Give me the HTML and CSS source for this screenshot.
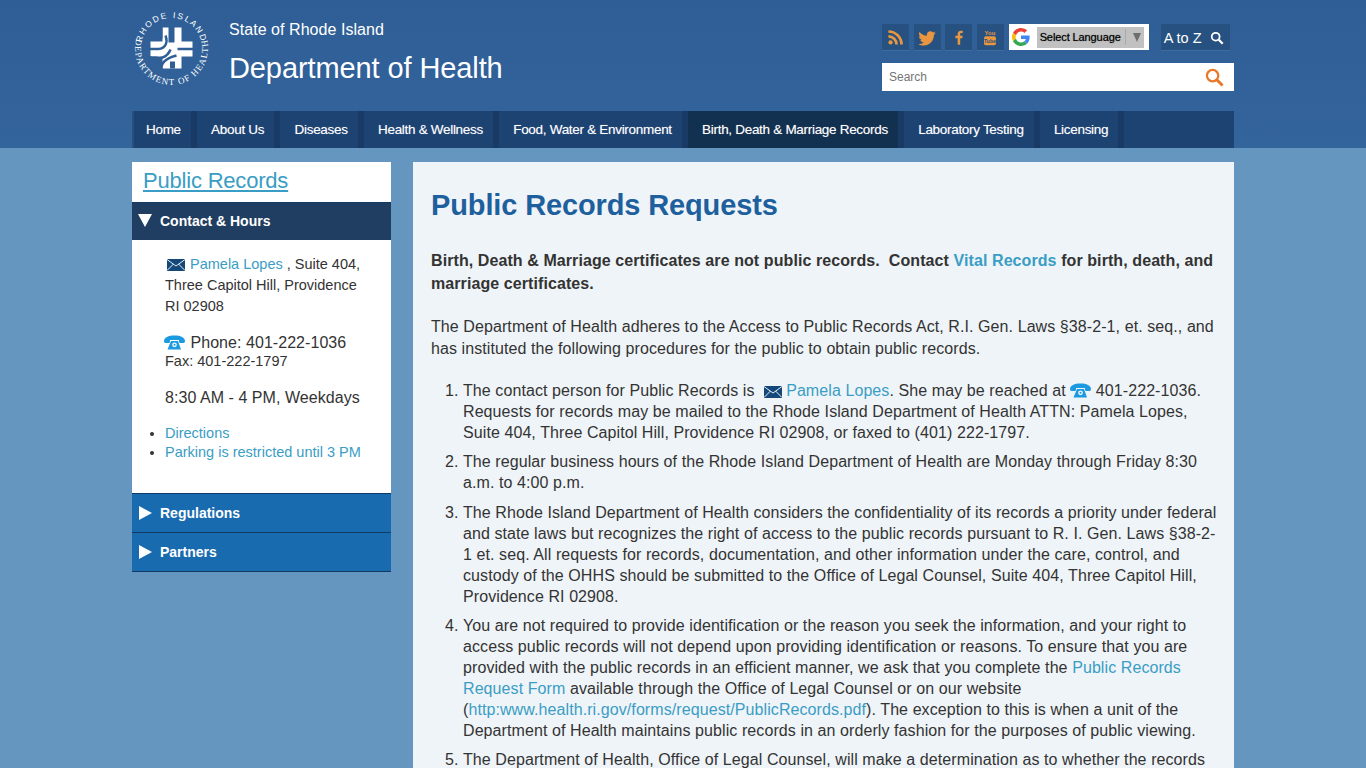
FILE: index.html
```html
<!DOCTYPE html>
<html lang="en">
<head>
<meta charset="utf-8">
<title>Public Records Requests</title>
<link rel="stylesheet" href="styles.css">
</head>
<body>
<svg class="sprites" width="0" height="0" aria-hidden="true">
  <symbol id="mail" viewBox="0 0 18 12">
    <rect width="18" height="12" fill="#14477a"/>
    <path d="M0 0.5 9 7 18 0.5M0 11.5 6.5 5M18 11.5 11.5 5" fill="none" stroke="#e8f0f6" stroke-width="1"/>
  </symbol>
  <symbol id="phone" viewBox="0 0 22 15">
    <path d="M.5 6C.5 2.500 5 .5 11 .5S21.500 2.500 21.500 6c0 1.300-.6 1.900-1.500 1.900h-3.300c-.9 0-1.200-.5-1.200-1.300V5h-9v1.600c0 .8-.3 1.300-1.200 1.300H2C1.100 7.900.5 7.300.5 6Z" fill="#1c9ae0"/>
    <path d="M7.500 6h7l3 8.500h-13.500Z" fill="#1c9ae0"/>
    <circle cx="11" cy="9.800" r="2.400" fill="#eef6fb"/>
    <circle cx="11" cy="9.800" r="1" fill="#1c9ae0"/>
  </symbol>
</svg>

<header class="site-header">
  <div class="wrap">
    <div class="top-row">
      <a class="brand" href="#">
        <svg class="logo" viewBox=".5 .5 80 80" role="img" aria-label="Rhode Island Department of Health seal">
          <defs>
            <path id="arcTop" d="M24.750 66.400A30.500 30.500 0 1 1 55.250 66.400"/>
            <path id="arcBot" d="M21.750 8.400A36.500 36.500 0 1 0 58.250 8.400"/>
          </defs>
          <text class="seal-text seal-top"><textPath href="#arcTop" startOffset="50%" text-anchor="middle">RHODE ISLAND</textPath></text>
          <text class="seal-text seal-bot"><textPath href="#arcBot" startOffset="50%" text-anchor="middle">DEPARTMENT OF HEALTH</textPath></text>
          <g fill="#fff">
            <rect x="31" y="19" width="19" height="41"/>
            <rect x="19" y="33" width="42" height="15"/>
          </g>
          <g fill="none" stroke="#2f5f96">
            <path d="M40 18V34" stroke-width="6"/>
            <path d="M41 60V53" stroke-width="5"/>
            <path d="M46 40.500H62" stroke-width="2.500"/>
            <path d="M18 40.500H27C33 40 37 35 34 27" stroke-width="2.500"/>
            <path d="M18 49C27 52 36 49 39 41" stroke-width="2.500"/>
            <path d="M30 61C29 55 34 50 45 47" stroke-width="2.500"/>
          </g>
          <g fill="#2f5f96">
            <rect x="18" y="48" width="8" height="3"/>
            <rect x="28" y="18" width="3" height="12"/>
          </g>
        </svg>
        <span class="brand-text">
          <span class="state">State of Rhode Island</span>
          <span class="dept">Department of Health</span>
        </span>
      </a>
      <div class="tools">
        <div class="tools-row">
          <a class="social" href="#" aria-label="RSS">
            <svg viewBox="0 0 24 24" width="17" height="17"><circle cx="5" cy="19" r="3" fill="#e8963f"/><path d="M2 10.500A11.500 11.500 0 0 1 13.500 22M2 3.500A18.500 18.500 0 0 1 20.500 22" fill="none" stroke="#e8963f" stroke-width="3.800"/></svg>
          </a>
          <a class="social" href="#" aria-label="Twitter">
            <svg viewBox="0 0 24 24" width="20" height="20"><path fill="#e8963f" d="M22.460 6c-.77.35-1.600.58-2.460.69.88-.53 1.560-1.370 1.880-2.380-.83.5-1.750.85-2.720 1.050C18.370 4.500 17.260 4 16 4c-2.350 0-4.270 1.920-4.270 4.290 0 .34.04.67.11.98C8.280 9.090 5.110 7.380 3 4.790c-.37.63-.58 1.370-.58 2.150 0 1.490.75 2.810 1.910 3.560-.71 0-1.370-.2-1.950-.5v.03c0 2.080 1.480 3.820 3.440 4.210a4.220 4.220 0 0 1-1.930.07 4.280 4.280 0 0 0 4 2.980 8.521 8.521 0 0 1-5.330 1.840c-.34 0-.68-.02-1.020-.06C3.440 20.290 5.700 21 8.120 21 16 21 20.330 14.460 20.330 8.790c0-.19 0-.37-.01-.56.84-.6 1.560-1.360 2.140-2.230z"/></svg>
          </a>
          <a class="social" href="#" aria-label="Facebook">
            <svg viewBox="0 0 10 18" width="8" height="15"><path fill="#e8963f" d="M6.500 18V10h2.700l.4-3.100H6.500V5c0-.9.3-1.500 1.600-1.500h1.600V.7C9.400.6 8.500.5 7.400.5 5 .5 3.300 2 3.300 4.600v2.300H.5V10h2.800v8Z"/></svg>
          </a>
          <a class="social" href="#" aria-label="YouTube">
            <svg viewBox="0 0 16 20" width="14" height="17"><text x="8" y="7" class="yt-you">You</text><rect x="1" y="8.500" width="14" height="10.500" rx="2" fill="#e8963f"/><text x="8" y="16.500" class="yt-tube">Tube</text></svg>
          </a>
          <div class="translate">
            <svg class="g-logo" viewBox="0 0 48 48" width="18" height="18"><path fill="#ea4335" d="M24 9.500c3.500 0 6.700 1.200 9.200 3.600l6.900-6.900C35.900 2.400 30.500 0 24 0 14.600 0 6.500 5.400 2.600 13.200l8 6.200C12.400 13.700 17.700 9.500 24 9.500z"/><path fill="#4285f4" d="M47 24.500c0-1.600-.1-3.100-.4-4.500H24v9h12.900c-.6 3-2.200 5.500-4.800 7.200l7.700 6C44.300 38 47 31.900 47 24.500z"/><path fill="#fbbc05" d="M10.500 28.600c-.5-1.400-.8-3-.8-4.600s.3-3.200.8-4.600l-8-6.200C.9 16.500 0 20.100 0 24s.9 7.500 2.600 10.800z"/><path fill="#34a853" d="M24 48c6.500 0 11.900-2.100 15.900-5.800l-7.700-6c-2.200 1.400-4.900 2.300-8.200 2.300-6.300 0-11.600-4.200-13.500-9.900l-8 6.200C6.500 42.600 14.600 48 24 48z"/></svg>
            <div class="lang-select">
              <span class="lang-label">Select Language</span>
              <span class="lang-arrow"></span>
            </div>
          </div>
          <a class="atoz" href="#"><span class="atoz-label">A to Z</span>
            <svg viewBox="0 0 16 16" width="14" height="14"><circle cx="6.500" cy="6.500" r="4.500" fill="none" stroke="#fff" stroke-width="2"/><path d="M10 10l4.500 4.500" stroke="#fff" stroke-width="2.600"/></svg>
          </a>
        </div>
        <form class="search">
          <span class="search-hint">Search</span>
          <svg viewBox="0 0 20 20" width="19" height="19"><circle cx="8" cy="8" r="6" fill="none" stroke="#e8792a" stroke-width="2.400"/><path d="M12.500 12.500l6 6" stroke="#e8792a" stroke-width="3"/></svg>
        </form>
      </div>
    </div>
    <nav class="main-nav">
      <a href="#">Home</a>
      <a href="#">About Us</a>
      <a href="#">Diseases</a>
      <a href="#">Health &amp; Wellness</a>
      <a href="#">Food, Water &amp; Environment</a>
      <a class="current" href="#">Birth, Death &amp; Marriage Records</a>
      <a href="#">Laboratory Testing</a>
      <a href="#">Licensing</a>
    </nav>
  </div>
</header>

<div class="wrap content-row">
  <aside class="sidebar">
    <h2 class="side-title"><a href="#">Public Records</a></h2>
    <h3 class="acc acc-open"><span class="tri-down"></span>Contact &amp; Hours</h3>
    <div class="acc-body">
      <p class="addr"><svg class="ico-mail side-mail"><use href="#mail"/></svg><a href="#">Pamela Lopes</a> , Suite 404, Three Capitol Hill, Providence RI 02908</p>
      <p class="phones"><span class="big"><svg class="ico-phone side-phone"><use href="#phone"/></svg> Phone: 401-222-1036</span>Fax: 401-222-1797</p>
      <p class="hours">8:30 AM - 4 PM, Weekdays</p>
      <ul class="side-links">
        <li><a href="#">Directions</a></li>
        <li><a href="#">Parking is restricted until 3 PM</a></li>
      </ul>
    </div>
    <h3 class="acc"><span class="tri-right"></span>Regulations</h3>
    <h3 class="acc"><span class="tri-right"></span>Partners</h3>
  </aside>
  <main class="article">
    <h1>Public Records Requests</h1>
    <p class="lead"><strong>Birth, Death &amp; Marriage certificates are not public records.&nbsp; Contact <a href="#">Vital Records</a> for birth, death, and marriage certificates.</strong></p>
    <p class="intro">The Department of Health adheres to the Access to Public Records Act, R.I. Gen. Laws §38-2-1, et. seq., and has instituted the following procedures for the public to obtain public records.</p>
    <ol>
      <li>The contact person for Public Records is &nbsp;<svg class="ico-mail"><use href="#mail"/></svg> <a href="#">Pamela Lopes</a>. She may be reached at <svg class="ico-phone inline-phone"><use href="#phone"/></svg> 401-222-1036. Requests for records may be mailed to the Rhode Island Department of Health ATTN: Pamela Lopes, Suite 404, Three Capitol Hill, Providence RI 02908, or faxed to (401) 222-1797.</li>
      <li>The regular business hours of the Rhode Island Department of Health are Monday through Friday 8:30 a.m. to 4:00 p.m.</li>
      <li>The Rhode Island Department of Health considers the confidentiality of its records a priority under federal and state laws but recognizes the right of access to the public records pursuant to R. I. Gen. Laws §38-2-1 et. seq. All requests for records, documentation, and other information under the care, control, and custody of the OHHS should be submitted to the Office of Legal Counsel, Suite 404, Three Capitol Hill, Providence RI 02908.</li>
      <li>You are not required to provide identification or the reason you seek the information, and your right to access public records will not depend upon providing identification or reasons. To ensure that you are provided with the public records in an efficient manner, we ask that you complete the <a href="#">Public Records Request Form</a> available through the Office of Legal Counsel or on our website (<a href="#">http:www.health.ri.gov/forms/request/PublicRecords.pdf</a>). The exception to this is when a unit of the Department of Health maintains public records in an orderly fashion for the purposes of public viewing.</li>
      <li>The Department of Health, Office of Legal Counsel, will make a determination as to whether the records</li>
    </ol>
  </main>
</div>
</body>
</html>
```
FILE: styles.css
```css
* { box-sizing: border-box; }
html, body { height: 768px; overflow: hidden; }
body {
  margin: 0;
  background: #6596bf;
  color: #333;
  font-family: "Liberation Sans", Arial, sans-serif;
  font-size: 16px;
}
a { color: #3a9dc5; text-decoration: none; }
.sprites { position: absolute; }
.wrap { width: 1102px; margin: 0 auto; }

.site-header { background: linear-gradient(#2e5e95, #33649b); height: 148px; }
.top-row { height: 111px; display: flex; justify-content: space-between; }
.brand { display: flex; padding-top: 9px; color: #fff; }
.logo { width: 80px; height: 80px; flex: none; margin-right: 17px; }
.seal-text { fill: #fff; }
.seal-top { font-family: "Liberation Sans", sans-serif; font-size: 8.500px; letter-spacing: 1.700px; }
.seal-bot { font-family: "Liberation Serif", serif; font-size: 9px; letter-spacing: 1.200px; }
.brand-text { display: flex; flex-direction: column; }
.state { font-size: 16px; line-height: 20px; margin-top: 11px; letter-spacing: 0.050px; }
.dept { font-size: 29px; line-height: 36px; margin-top: 10px; letter-spacing: -0.100px; }

.tools { width: 352px; padding-top: 24px; }
.tools-row { display: flex; height: 27px; }
.social {
  width: 27px; height: 27px; margin-right: 4.670px;
  background: #265180; border-bottom: 1px solid #3d6c9f;
  display: flex; align-items: center; justify-content: center; padding-top: 1px;
}
.yt-you { fill: #e8963f; font: bold 7px "Liberation Sans", sans-serif; text-anchor: middle; }
.yt-tube { fill: #265180; font: bold 6px "Liberation Sans", sans-serif; text-anchor: middle; }
.translate {
  width: 140px; height: 26px; background: #fff;
  display: flex; align-items: center; padding: 0 5px 0 3px;
}
.g-logo { flex: none; margin-right: 7px; }
.lang-select {
  flex: 1; height: 21px; background: #c1c1c1; color: #000;
  display: flex; align-items: center; padding-left: 3px; font-size: 11px;
}
.lang-label {
  width: 86px; white-space: nowrap; border-right: 1px solid #aaa;
  text-shadow: 0 0 1px #555; letter-spacing: -0.100px; line-height: 16px;
}
.lang-arrow {
  width: 0; height: 0; margin-left: 7px;
  border: 4.500px solid transparent; border-top: 9px solid #6e6e6e; border-bottom: 0;
}
.atoz {
  width: 69px; height: 27px; margin-left: 12px; padding: 1px 6px 0 3px;
  background: #265180; border-bottom: 1px solid #3d6c9f; color: #fff;
  font-size: 14.500px; display: flex; align-items: center; justify-content: space-between;
}
.search {
  margin-top: 12px; height: 28px; background: #fff; display: flex;
  align-items: center; justify-content: space-between; padding: 0 10px 0 7px;
}
.search-hint { font-size: 12px; color: #757575; }

.main-nav {
  height: 37px; display: flex; background: #1d4373;
  border-left: 2px solid #265080;
}
.main-nav a {
  color: #fff; font-size: 13.500px; line-height: 37px; padding: 0 10px 0 12px;
  border-right: 6px solid #193a64; text-shadow: 0 0 1px rgba(255,255,255,.4);
  white-space: nowrap; letter-spacing: -0.300px;
}
.main-nav a + a { padding-left: 14.300px; }
.main-nav .current { background: #12304f; }

.content-row { display: flex; gap: 22px; padding-top: 14px; align-items: flex-start; }

.sidebar { width: 259px; flex: none; }
.side-title { margin: 0; height: 40px; background: #fff; padding-left: 11px; font-weight: 400; font-size: 22px; line-height: 37px; letter-spacing: -0.200px; }
.side-title a { text-decoration: underline; }
.acc {
  margin: 0; height: 39px; background: #196bb0; color: #fff;
  border-bottom: 1px solid #123a63; font-size: 14px; font-weight: 700;
  display: flex; align-items: center; padding-left: 7px;
}
.acc-open { height: 38px; background: #203e61; border-top: 1px solid #123a63; border-bottom: 0; padding-bottom: 2px; }
.tri-down { width: 0; height: 0; margin: 0 8px 0 -1px; border: 7.500px solid transparent; border-top: 13px solid #fff; border-bottom: 0; }
.tri-right { width: 0; height: 0; margin-right: 8px; border: 7px solid transparent; border-left: 13px solid #fff; border-right: 0; }
.acc-body { background: #fff; height: 254px; padding: 14px 28px 0 33px; font-size: 14.500px; border-bottom: 1px solid #123a63; }
.acc-body p { margin: 0; }
.acc-body .addr { line-height: 21px; }
.acc-body .phones { line-height: 19px; margin-top: 16px; }
.big { display: block; font-size: 16px; letter-spacing: 0.050px; }
.acc-body .hours { font-size: 16px; line-height: 20px; margin-top: 17px; letter-spacing: 0.050px; }
.side-links { margin: 16px 0 0; padding: 0; font-size: 14.500px; line-height: 19px; }

.ico-mail { width: 18px; height: 12px; vertical-align: -2px; }
.side-mail { margin: 0 5px 0 2px; }
.ico-phone { width: 23px; height: 15px; vertical-align: -2px; }
.side-phone { margin-left: -2px; }
.inline-phone { margin: 0 -1px; }

.article { flex: 1; background: #eff4f8; height: 620px; padding: 0 16px 0 18px; letter-spacing: 0.085px; }
.article h1 { margin: 25px 0 0; color: #1e5f9e; font-size: 29px; line-height: 36px; letter-spacing: -0.130px; }
.article p { margin: 0; }
.article .lead { margin-top: 26px; line-height: 23px; }
.article .intro { margin-top: 21px; line-height: 22px; }
.article ol { margin: 20px 0 0; padding-left: 32px; line-height: 21px; }
.article li { margin-bottom: 8.330px; }
```
